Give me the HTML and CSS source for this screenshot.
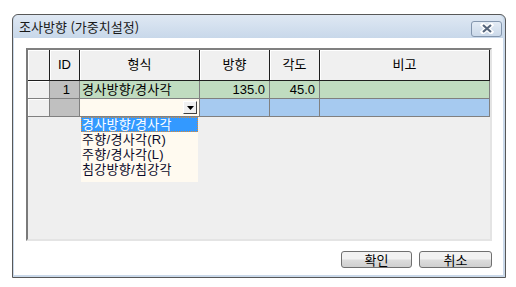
FILE: index.html
```html
<!DOCTYPE html>
<html lang="ko">
  <head>
    <meta charset="UTF-8" />
    <title>조사방향 (가중치설정)</title>
    <link rel="stylesheet" href="styles.css">
  </head>
  <body>
    <div class="window">
      <div class="titlebar">
        <span class="title">조사방향 (가중치설정)</span>
        <div class="close">
          <svg width="16" height="11" viewBox="0 0 16 11">
            <path d="M4 2 L12 9 M12 2 L4 9" stroke="#fff" stroke-width="4.5" stroke-linecap="square" />
            <path d="M4 2 L12 9 M12 2 L4 9" stroke="#56667c" stroke-width="2.2" />
          </svg>
        </div>
      </div>
      <div class="content">
        <div class="grid">
          <div class="row head">
            <div class="cell"></div>
            <div class="cell">ID</div>
            <div class="cell">형식</div>
            <div class="cell">방향</div>
            <div class="cell">각도</div>
            <div class="cell">비고</div>
          </div>
          <div class="row green">
            <div class="cell rh"></div>
            <div class="cell id">1</div>
            <div class="cell txt">경사방향/경사각</div>
            <div class="cell num">135.0</div>
            <div class="cell num">45.0</div>
            <div class="cell"></div>
          </div>
          <div class="row blue">
            <div class="cell rh"></div>
            <div class="cell id"></div>
            <div class="cell combo">
              <div class="drop">
                <svg width="7" height="4" viewBox="0 0 7 4"><path d="M0 0 H7 L3.5 4 Z" fill="#000" /></svg>
              </div>
              <ul class="list">
                <li class="sel">경사방향/경사각</li>
                <li>주향/경사각(R)</li>
                <li>주향/경사각(L)</li>
                <li>침강방향/침강각</li>
              </ul>
            </div>
            <div class="cell"></div>
            <div class="cell"></div>
            <div class="cell"></div>
          </div>
        </div>
        <div class="buttons">
          <div class="btn">확인</div>
          <div class="btn">취소</div>
        </div>
      </div>
    </div>
  </body>
</html>
```

FILE: styles.css
```css
body {
  margin: 0;
  background: #fff;
  font-family: "Liberation Sans", "Noto Sans CJK KR", sans-serif;
  font-size: 13px;
  color: #000;
}

.window {
  margin: 14px 0 0 12px;
  width: 494px;
  height: 264px;
  box-sizing: border-box;
  border: 1px solid #585858;
  border-radius: 6px 6px 0 0;
  background: #cad9ea;
  padding: 0 2px 2px 1px;
  display: flex;
  flex-direction: column;
}

.titlebar {
  height: 23px;
  display: flex;
  align-items: center;
  justify-content: space-between;
  padding: 0 1px 0 5px;
  border-radius: 5px 5px 0 0;
  background: linear-gradient(#dfe8f3, #c8d8ea);
}

.title {
  font-family: "Noto Sans CJK KR", sans-serif;
  font-size: 13px;
  color: #1a1a1a;
  margin-top: -1px;
}

.close {
  width: 29px;
  height: 14px;
  margin-top: 4px;
  border: 1px solid #8496ad;
  border-radius: 3px;
  background: linear-gradient(#e4ecf5, #cbd9e9);
  display: flex;
  align-items: center;
  justify-content: center;
}

.content {
  flex: 1;
  background: #fff;
  padding: 10px 11px 0 12px;
  display: flex;
  flex-direction: column;
}

.grid {
  height: 193px;
  box-sizing: border-box;
  border: 2px solid;
  border-color: #808080 #e4e4e4 #e4e4e4 #7a7a7a;
  background: #efefef;
}

.row {
  display: grid;
  grid-template-columns: 22px 30px 120px 70px 50px 170px;
  height: 18px;
}

.cell {
  box-sizing: border-box;
  border-right: 1px solid #808080;
  border-bottom: 1px solid #808080;
  line-height: 17px;
  white-space: nowrap;
}

.head {
  height: 31px;
}

.head .cell {
  background: #f0f0f0;
  border-right: 1px solid #1e1e1e;
  border-bottom: 1px solid #1e1e1e;
  box-shadow: inset 1px 1px 0 #fff;
  text-align: center;
  line-height: 30px;
}

.green .cell {
  background: #c0dcc0;
}

.blue .cell {
  background: #a6caf0;
}

.row .rh {
  background: #f0f0f0;
  box-shadow: inset 1px 1px 0 #fff;
}

.row .id {
  background: #c0c0c0;
  text-align: right;
  padding-right: 9px;
}

.txt {
  padding-left: 2px;
  letter-spacing: 0.3px;
}

.num {
  text-align: right;
  padding-right: 4px;
}

.row .combo {
  position: relative;
  background: #fffaf0;
}

.drop {
  position: absolute;
  right: 2px;
  top: 2px;
  width: 14px;
  height: 13px;
  box-sizing: border-box;
  background: #f0f0f0;
  border: 1px solid;
  border-color: #fff #404040 #404040 #fff;
  display: flex;
  align-items: center;
  justify-content: center;
}

.list {
  position: absolute;
  left: 1px;
  top: 18px;
  width: 117px;
  height: 65px;
  margin: 0;
  padding: 0;
  list-style: none;
  background: #fffaf0;
  font-size: 13px;
  letter-spacing: 0.3px;
  z-index: 2;
}

.list li {
  height: 15px;
  line-height: 15px;
  padding-left: 1px;
  color: #0a0a2a;
}

.list .sel {
  background: #3399ff;
  color: #fff;
  outline: 1px dotted #e08a30;
  outline-offset: -1px;
}

.buttons {
  display: flex;
  justify-content: flex-end;
  gap: 7px;
  margin-top: 10px;
}

.btn {
  width: 71px;
  height: 17px;
  box-sizing: border-box;
  border: 1px solid #707070;
  border-radius: 3px;
  background: linear-gradient(#f2f2f2 45%, #dcdcdc 55%, #cfcfcf);
  text-align: center;
  line-height: 15px;
  font-family: "Noto Sans CJK KR", sans-serif;
}

.btn + .btn {
  width: 73px;
}
```
